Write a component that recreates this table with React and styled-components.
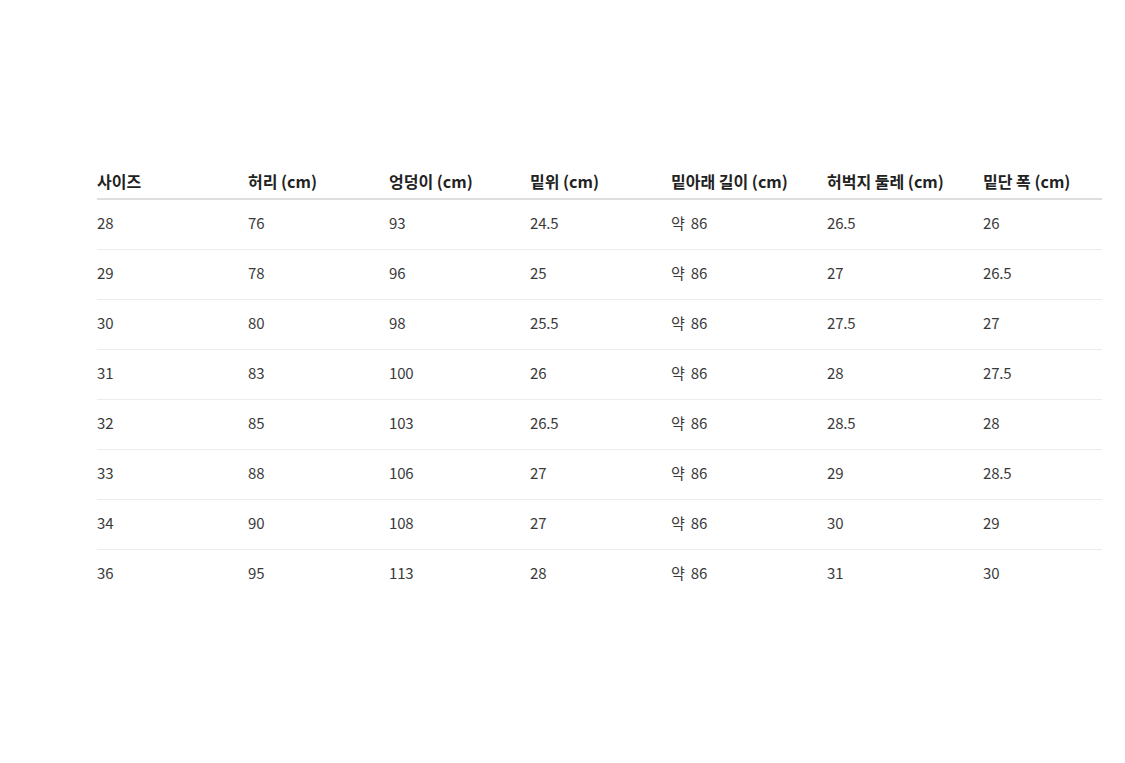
import React from 'react';
import styled, { createGlobalStyle } from 'styled-components';

const GlobalStyle = createGlobalStyle`
  body {
    margin: 0;
    background: #fff;
    font-family: "Noto Sans CJK KR", "Noto Sans", sans-serif;
  }
`;

const Page = styled.div`
  padding: 164px 0 0 97px;
  height: 763px;
  box-sizing: border-box;
`;

const Table = styled.table`
  width: 1005px;
  border-collapse: collapse;
  table-layout: fixed;
  font-size: 15px;
  line-height: 22px;
`;

const Head = styled.th`
  text-align: left;
  font-size: 16px;
  font-weight: 700;
  color: #222;
  padding: 6px 0;
  border-bottom: 2px solid #dedede;
  white-space: nowrap;
`;

const Row = styled.tr`
  border-bottom: 1px solid #ececec;
  &:last-child {
    border-bottom: none;
  }
`;

const Cell = styled.td`
  padding: 12px 0 15px;
  color: #3a3a3a;
  letter-spacing: -0.2px;
  word-spacing: 3px;
`;

const columns = [
  { label: '사이즈', width: 151 },
  { label: '허리 (cm)', width: 141 },
  { label: '엉덩이 (cm)', width: 141 },
  { label: '밑위 (cm)', width: 141 },
  { label: '밑아래 길이 (cm)', width: 156 },
  { label: '허벅지 둘레 (cm)', width: 156 },
  { label: '밑단 폭 (cm)', width: 119 },
];

const rows = [
  ['28', '76', '93', '24.5', '약 86', '26.5', '26'],
  ['29', '78', '96', '25', '약 86', '27', '26.5'],
  ['30', '80', '98', '25.5', '약 86', '27.5', '27'],
  ['31', '83', '100', '26', '약 86', '28', '27.5'],
  ['32', '85', '103', '26.5', '약 86', '28.5', '28'],
  ['33', '88', '106', '27', '약 86', '29', '28.5'],
  ['34', '90', '108', '27', '약 86', '30', '29'],
  ['36', '95', '113', '28', '약 86', '31', '30'],
];

function App() {
  return (
    <>
      <GlobalStyle />
      <Page>
        <Table>
          <colgroup>
            {columns.map((c) => (
              <col key={c.label} style={{ width: c.width }} />
            ))}
          </colgroup>
          <thead>
            <tr>
              {columns.map((c) => (
                <Head key={c.label}>{c.label}</Head>
              ))}
            </tr>
          </thead>
          <tbody>
            {rows.map((r) => (
              <Row key={r[0]}>
                {r.map((v, i) => (
                  <Cell key={i}>{v}</Cell>
                ))}
              </Row>
            ))}
          </tbody>
        </Table>
      </Page>
    </>
  );
}

export default App;
